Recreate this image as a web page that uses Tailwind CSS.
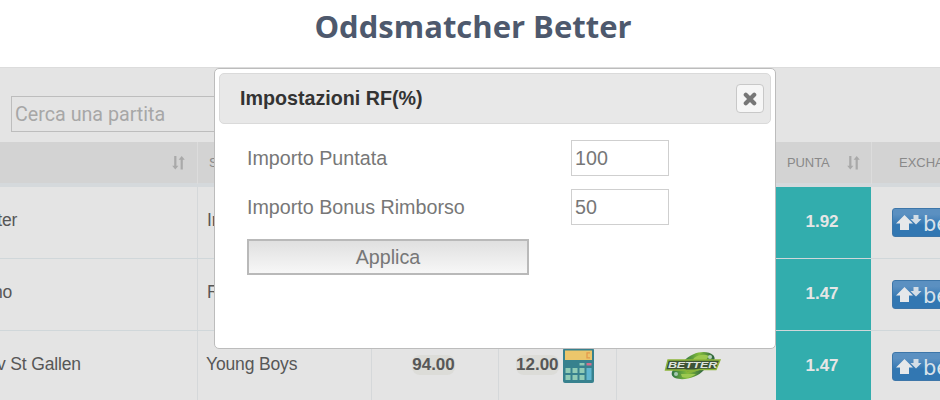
<!DOCTYPE html>
<html lang="it">

<head>
  <meta charset="UTF-8" />
  <title>Oddsmatcher Better</title>
  <meta name="viewport" content="width=device-width, initial-scale=1" />
  <script src="https://cdn.jsdelivr.net/npm/@tailwindcss/browser@4"></script>
</head>

<body class="bg-white h-[400px] overflow-hidden font-['Liberation_Sans',sans-serif]">
  <!-- Shared icons -->
  <svg class="hidden">
    <symbol id="sort" viewBox="0 0 13 14">
      <path d="M2.200 0h2.200v9.800h2L3.300 13.600.2 9.800h2zM8.600 13.600V3.800h-2L9.700 0l3.100 3.800h-2v9.800z" fill="#a9a9a9" />
    </symbol>
    <symbol id="arrows" viewBox="0 0 26 20">
      <path d="M8.500 2l8.500 8.500h-4v6.500h-9v-6.500H0z" fill="#e6e8ea" />
      <path d="M17.500 2h5v4h3l-5.500 5.500-5.500-5.500h3z" fill="#d3dde6" />
    </symbol>
  </svg>

  <header class="h-[67px] text-center">
    <h1 class="pt-[4px] pl-[6px] text-[31px] leading-[44px] font-bold text-[#4e596d] font-['Open_Sans',sans-serif]">Oddsmatcher Better</h1>
  </header>

  <main class="h-[333px] bg-[#e4e4e4] border-t border-[#dcdcdc] overflow-hidden">
    <div class="h-[74px] pt-[28px] pl-[11px]">
      <div class="w-[260px] h-[36px] border border-[#bdbdbd] pl-[3px] text-[19.700px] leading-[35px] text-[#a7a7a7] font-['Roboto',sans-serif]">Cerca una partita</div>
    </div>

    <div class="grid grid-cols-[197px_174px_127px_118px_160px_95px_1fr] h-[45px] bg-[#d3d3d3] border-b-4 border-[#d5d9dc] text-[13px] leading-[42px] text-[#898989]">
      <div class="flex items-center justify-end pr-[12px]"><svg class="w-[13px] h-[14px]"><use href="#sort" /></svg></div>
      <div class="border-l border-[#dcdcdc] pl-[11px]">SCOMMESSA</div>
      <div class="border-l border-[#dcdcdc]"></div>
      <div class="border-l border-[#dcdcdc]"></div>
      <div class="border-l border-[#dcdcdc]"></div>
      <div class="flex items-center justify-between pl-[11px] pr-[11px]"><span class="tracking-[-0.1px]">PUNTA</span> <svg class="w-[13px] h-[14px]"><use href="#sort" /></svg></div>
      <div class="border-l border-[#dcdcdc] pl-[27px]">EXCHANGE</div>
    </div>

    <div class="grid grid-cols-[197px_174px_127px_118px_160px_95px_1fr] h-[72px] border-b border-[#d0d7da] text-[17.500px] tracking-[-0.15px] leading-[67px] text-[#575757]">
      <div class="flex"><span class="-ml-[17px] whitespace-nowrap">Inter</span></div>
      <div class="border-l border-[#d5d8da] pl-[9px]">Inter</div>
      <div class="border-l border-[#d5d8da]"></div>
      <div class="border-l border-[#d5d8da]"></div>
      <div class="border-l border-[#d5d8da]"></div>
      <div class="bg-[#32adad] text-center text-[17px] tracking-normal leading-[69px] font-bold text-[#e6e6e6] pr-[3px]">1.92</div>
      <div class="flex items-center pl-[21px]">
        <div class="shrink-0 flex items-center w-[90px] h-[29px] rounded-[3px] border border-[#3d76a9] bg-linear-to-b from-[#5b90c1] from-20% to-[#3277b2] to-60% pl-[3px]">
          <svg class="shrink-0 w-[26px] h-[20px]"><use href="#arrows" /></svg>
          <span class="pl-[1px] pt-[3px] text-[21px] leading-[29px] tracking-normal text-[#d8e2ea] font-['DejaVu_Sans',sans-serif]">betfair</span>
        </div>
      </div>
    </div>

    <div class="grid grid-cols-[197px_174px_127px_118px_160px_95px_1fr] h-[72px] border-b border-[#d0d7da] text-[17.500px] tracking-[-0.15px] leading-[67px] text-[#575757]">
      <div class="flex"><span class="-ml-[7px] whitespace-nowrap">no</span></div>
      <div class="border-l border-[#d5d8da] pl-[9px]">Roma</div>
      <div class="border-l border-[#d5d8da]"></div>
      <div class="border-l border-[#d5d8da]"></div>
      <div class="border-l border-[#d5d8da]"></div>
      <div class="bg-[#32adad] text-center text-[17px] tracking-normal leading-[69px] font-bold text-[#e6e6e6] pr-[3px]">1.47</div>
      <div class="flex items-center pl-[21px]">
        <div class="shrink-0 flex items-center w-[90px] h-[29px] rounded-[3px] border border-[#3d76a9] bg-linear-to-b from-[#5b90c1] from-20% to-[#3277b2] to-60% pl-[3px]">
          <svg class="shrink-0 w-[26px] h-[20px]"><use href="#arrows" /></svg>
          <span class="pl-[1px] pt-[3px] text-[21px] leading-[29px] tracking-normal text-[#d8e2ea] font-['DejaVu_Sans',sans-serif]">betfair</span>
        </div>
      </div>
    </div>

    <div class="grid grid-cols-[197px_174px_127px_118px_160px_95px_1fr] h-[72px] border-b border-[#d0d7da] text-[17.500px] tracking-[-0.15px] leading-[67px] text-[#575757]">
      <div class="flex"><span class="-ml-[3px] whitespace-nowrap">v St Gallen</span></div>
      <div class="border-l border-[#d5d8da] pl-[8px]">Young Boys</div>
      <div class="border-l border-[#d5d8da] flex justify-center pt-[24px] pr-[3px]">
        <span class="h-[20px] rounded-lg bg-[#dcdcd8] text-[17px] tracking-normal leading-[20px] font-bold">94.00</span>
      </div>
      <div class="border-l border-[#d5d8da] flex pt-[24px] pl-[17px]">
        <span class="h-[20px] rounded-lg bg-[#dcdcd8] text-[17px] tracking-normal leading-[20px] font-bold">12.00</span>
        <svg class="-mt-[7px] ml-[4px] w-[31px] h-[35px]" viewBox="0 0 31 35">
          <rect width="31" height="35" rx="2" fill="#37818e" />
          <path d="M2 2.500h27v9.500h-27z" fill="#ebc66b" />
          <path d="M27 4.800h-3v5h3" fill="none" stroke="#e59a4c" stroke-width="1.300" />
          <path d="M16.500 15h5v2.500h-5z" fill="#8fc9b5" />
          <path d="M23.500 15h5v2.500h-5z" fill="#d56c8c" />
          <path d="M2.500 20h5v5h-5zM9.500 20h5v5h-5zM16.500 20h5v5h-5zM2.500 27h5v5h-5zM9.500 27h5v5h-5zM16.500 27h5v5h-5z" fill="#90cbb5" />
          <path d="M23.500 20h5v12h-5z" fill="#60b6d0" />
        </svg>
      </div>
      <div class="border-l border-[#d5d8da] pt-[20px] pl-[47px]">
        <svg class="w-[58px] h-[30px]" viewBox="0 0 58 30">
          <defs>
            <linearGradient id="leaf" x1="0" x2="1">
              <stop offset="0" stop-color="#2f7445" />
              <stop offset=".5" stop-color="#84bd3b" />
              <stop offset="1" stop-color="#285f3f" />
            </linearGradient>
          </defs>
          <path d="M20 10C27 1 43-2 49 4c3 3 1 6-1 8H20z" fill="url(#leaf)" />
          <path d="M30 7c5-4 11-4 15-2l-3 4H29z" fill="#9cc850" />
          <path d="M9 19h31C33 27 19 30 11 27c-4-2-4-5-2-8z" fill="url(#leaf)" />
          <path d="M17 23h15c-4 3-10 5-14 3z" fill="#9cc850" />
          <path d="M4 9h52l-4 9.500H35l-11 3-3-2.500H1.500z" fill="#3d5236" stroke="#8db53a" stroke-width="1.400" />
          <path d="M17 18.500h20l-10 3.200z" fill="#86b33a" />
          <circle cx="46" cy="6" r="2" fill="#b8d3c0" />
          <circle cx="12" cy="23" r="2" fill="#a5c8b1" />
          <text x="4" y="17" textLength="49" lengthAdjust="spacingAndGlyphs" font-family="Liberation Sans" font-size="9" font-weight="bold" font-style="italic" fill="#dde2dc">BETTER</text>
        </svg>
      </div>
      <div class="bg-[#32adad] text-center text-[17px] tracking-normal leading-[69px] font-bold text-[#e6e6e6] pr-[3px]">1.47</div>
      <div class="flex items-center pl-[21px]">
        <div class="shrink-0 flex items-center w-[90px] h-[29px] rounded-[3px] border border-[#3d76a9] bg-linear-to-b from-[#5b90c1] from-20% to-[#3277b2] to-60% pl-[3px]">
          <svg class="shrink-0 w-[26px] h-[20px]"><use href="#arrows" /></svg>
          <span class="pl-[1px] pt-[3px] text-[21px] leading-[29px] tracking-normal text-[#d8e2ea] font-['DejaVu_Sans',sans-serif]">betfair</span>
        </div>
      </div>
    </div>
  </main>

  <!-- RF settings dialog -->
  <div class="absolute left-[214px] top-[68px] w-[562px] h-[281px] bg-white border border-[#bcbcbc] rounded-[5px] p-[4px]">
    <div class="flex items-center justify-between h-[51px] border border-[#dadada] rounded-[5px] bg-[#e8e8e8] pl-[20px] pr-[6px]">
      <h2 class="pt-[1px] text-[19.700px] font-bold text-[#333333]">Impostazioni RF(%)</h2>
      <button class="flex items-center justify-center w-[28px] h-[29px] bg-[#f6f6f6] border border-[#c8c8c8] rounded-[4px]">
        <svg class="w-[14px] h-[14px]" viewBox="0 0 14 14">
          <path d="M2.800 2.800l8.400 8.400M11.200 2.800l-8.400 8.400" stroke="#777777" stroke-width="4.200" stroke-linecap="round" />
        </svg>
      </button>
    </div>

    <div class="pt-[16px] pl-[28px] text-[19.700px] text-[#777777]">
      <div class="flex h-[49px]">
        <label for="puntata" class="w-[324px] leading-[36px]">Importo Puntata</label>
        <input id="puntata" value="100" class="w-[98px] h-[36px] border border-[#cfcfcf] px-[3px]" />
      </div>
      <div class="flex h-[50px]">
        <label for="rimborso" class="w-[324px] leading-[37px]">Importo Bonus Rimborso</label>
        <input id="rimborso" value="50" class="w-[98px] h-[36px] border border-[#cfcfcf] px-[3px]" />
      </div>
      <button class="block w-[282px] h-[36px] border-2 border-[#b9b9b9] bg-linear-to-b from-[#e0e0e0] to-[#f7f7f7] leading-[32px]">Applica</button>
    </div>
  </div>
</body>

</html>
